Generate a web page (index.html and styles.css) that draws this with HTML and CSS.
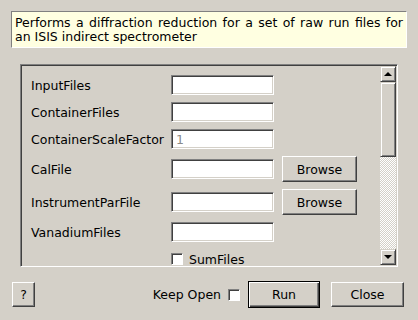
FILE: index.html
```html
<!DOCTYPE html>
<html lang="en">
<head>
  <meta charset="UTF-8" />
  <title>IndirectDiffractionReduction</title>
  <link rel="stylesheet" href="styles.css">
</head>
<body>
  <div class="description">
    <span class="line justified">Performs a diffraction reduction for a set of raw run files for</span>
    <span class="line">an ISIS indirect spectrometer</span>
  </div>

  <div class="scroll-frame">
    <div class="props">
      <label class="name">InputFiles</label>
      <input class="field" type="text">

      <label class="name">ContainerFiles</label>
      <input class="field" type="text">

      <label class="name">ContainerScaleFactor</label>
      <input class="field" type="text" placeholder="1">

      <label class="name">CalFile</label>
      <input class="field" type="text">
      <button class="btn browse">Browse</button>

      <label class="name">InstrumentParFile</label>
      <input class="field" type="text">
      <button class="btn browse">Browse</button>

      <label class="name">VanadiumFiles</label>
      <input class="field" type="text">

      <label class="check-row"><span class="check"></span>SumFiles</label>
    </div>
    <div class="scrollbar">
      <div class="sb-btn"><span class="arrow up"></span></div>
      <div class="sb-handle"></div>
      <div class="sb-trough"></div>
      <div class="sb-btn"><span class="arrow down"></span></div>
    </div>
  </div>

  <div class="footer">
    <button class="btn help">?</button>
    <label class="keep-open">Keep Open <span class="check"></span></label>
    <button class="btn run">Run</button>
    <button class="btn close">Close</button>
  </div>
</body>
</html>
```

FILE: styles.css
```css
body {
  margin: 0;
  padding: 11px 11px 0;
  background-color: #d4d0c8;
  color: #000;
  font-family: "DejaVu Sans", sans-serif;
  font-size: 12.5px;
}
.description {
  background-color: #ffffe1;
  border: 1px solid;
  border-color: #808080 #ffffff #ffffff #808080;
  padding: 4px 3px 3px;
  line-height: 14px;
  margin-bottom: 16px;
}
.line {
  display: block;
  white-space: nowrap;
}
.justified {
  white-space: normal;
  text-align: justify;
  text-align-last: justify;
}
.scroll-frame {
  margin: 0 9px;
  height: 203px;
  box-sizing: border-box;
  border: 1px solid;
  border-color: #808080 #ffffff #ffffff #808080;
  box-shadow: inset 1px 1px #404040, inset -1px -1px #d4d0c8;
  padding: 1px;
  display: flex;
}
.props {
  flex: 1;
  overflow: hidden;
  display: grid;
  grid-template-columns: 132px 103px 75px;
  column-gap: 8px;
  row-gap: 7px;
  align-items: center;
  align-content: start;
  padding: 9px 0 0 9px;
}
.name {
  grid-column: 1;
  white-space: nowrap;
}
.field {
  grid-column: 2;
  width: 103px;
  height: 20px;
  box-sizing: border-box;
  margin: 0;
  padding: 0 4px;
  border: 1px solid;
  border-color: #808080 #ffffff #ffffff #808080;
  box-shadow: inset 1px 1px #404040, inset -1px -1px #d4d0c8;
  background: #fff;
  font: inherit;
  outline: none;
}
.field::placeholder {
  color: #8a8a8a;
}
.btn {
  margin: 0;
  padding: 0;
  box-sizing: border-box;
  height: 25px;
  background-color: #d4d0c8;
  border: 1px solid;
  border-color: #ffffff #404040 #404040 #ffffff;
  box-shadow: inset -1px -1px #808080;
  font: inherit;
  color: #000;
}
.browse {
  grid-column: 3;
  width: 75px;
  height: 26px;
}
.check {
  display: inline-block;
  width: 12px;
  height: 12px;
  box-sizing: border-box;
  border: 1px solid;
  border-color: #808080 #ffffff #ffffff #808080;
  box-shadow: inset 1px 1px #404040;
  background: #fff;
}
.check-row {
  grid-column: 2 / span 2;
  height: 20px;
  display: flex;
  align-items: center;
  gap: 6px;
}
.scrollbar {
  width: 16px;
  display: flex;
  flex-direction: column;
}
.sb-btn,
.sb-handle {
  box-sizing: border-box;
  background-color: #d4d0c8;
  border: 1px solid;
  border-color: #d4d0c8 #404040 #404040 #d4d0c8;
  box-shadow: inset 1px 1px #ffffff, inset -1px -1px #808080;
}
.sb-btn {
  height: 16px;
  display: flex;
  align-items: center;
  justify-content: center;
}
.sb-handle {
  height: 75px;
}
.sb-trough {
  flex: 1;
  background: repeating-conic-gradient(#ffffff 0 25%, #d4d0c8 0 50%) 0 0 / 2px 2px;
}
.arrow {
  width: 0;
  height: 0;
  border-left: 4px solid transparent;
  border-right: 4px solid transparent;
}
.arrow.up {
  border-bottom: 4px solid #000;
}
.arrow.down {
  border-top: 4px solid #000;
}
.footer {
  display: flex;
  align-items: center;
  margin: 14px 3px 0 1px;
  height: 27px;
}
.help {
  width: 23px;
}
.keep-open {
  margin-left: auto;
  display: flex;
  align-items: center;
  gap: 7px;
  margin-right: 8px;
}
.run {
  width: 72px;
  height: 27px;
  border: 1px solid #000;
  box-shadow: inset 1px 1px #ffffff, inset -1px -1px #404040, inset -2px -2px #808080;
}
.close {
  width: 73px;
  margin-left: 11px;
}
```
